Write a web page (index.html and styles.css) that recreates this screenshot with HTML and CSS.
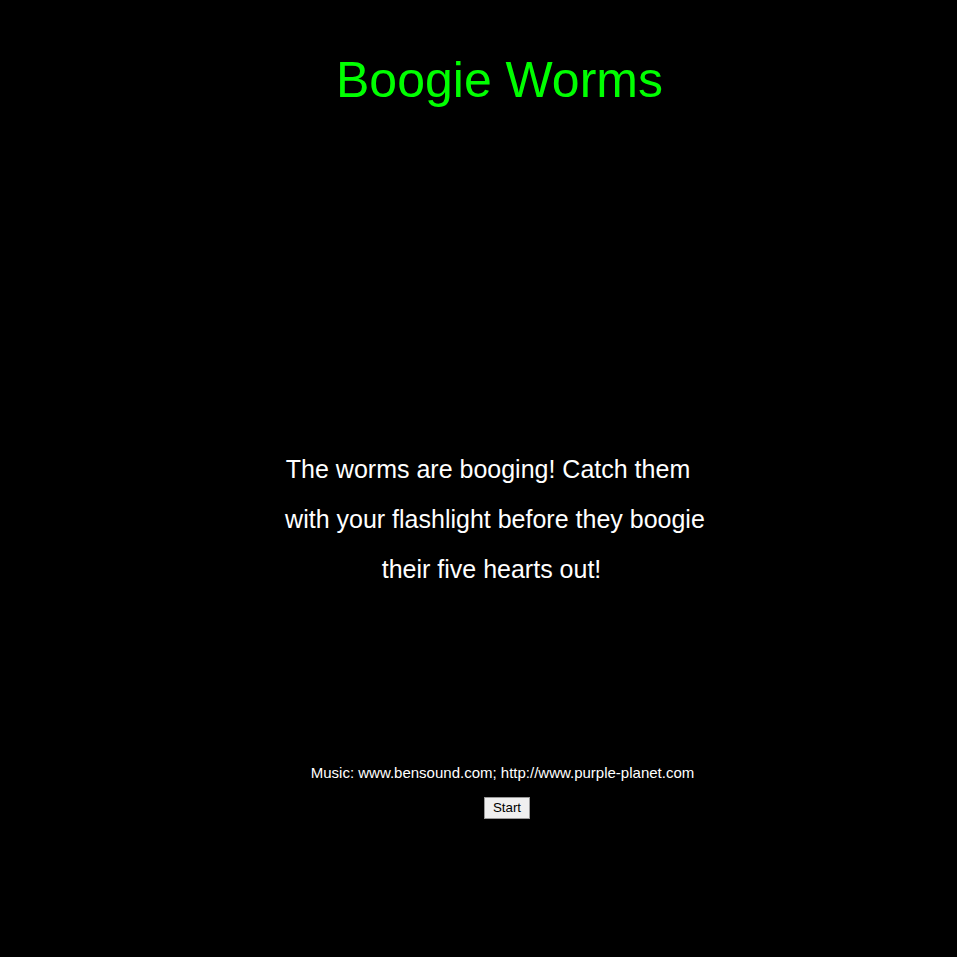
FILE: index.html
```html
<!DOCTYPE html>
<html lang="en">
<head>
<meta charset="utf-8">
<title>Boogie Worms</title>
<link rel="stylesheet" href="styles.css">
</head>
<body>
<main class="page">
  <h1 class="title">Boogie Worms</h1>
  <p class="intro">The worms are booging! Catch them&nbsp;<br>&nbsp;with your flashlight before they boogie<br>their five hearts out!</p>
  <p class="credits">Music: www.bensound.com; http://www.purple-planet.com</p>
  <div class="actions"><button class="start" type="button">Start</button></div>
</main>
</body>
</html>
```

FILE: styles.css
```css
html, body {
  margin: 0;
  padding: 0;
  background: #000;
}
body {
  font-family: "Liberation Sans", Arial, sans-serif;
  color: #fff;
}
.page {
  display: flex;
  flex-direction: column;
  padding-top: 52px;
}
.title {
  margin: 0;
  font-size: 50px;
  line-height: 56px;
  font-weight: normal;
  color: #00ff00;
  text-align: center;
  padding-left: 42px;
}
.intro {
  margin: 336px 0 0 0;
  font-size: 25px;
  line-height: 50px;
  text-align: center;
  padding-left: 26px;
}
.credits {
  margin: 170px 0 0 0;
  font-size: 15px;
  line-height: 17px;
  text-align: center;
  padding-left: 48px;
}
.actions {
  margin-top: 16px;
  display: flex;
  justify-content: center;
  padding-left: 57px;
}
.start {
  font-family: "Liberation Sans", Arial, sans-serif;
  font-size: 13.33px;
  line-height: 16px;
  padding: 2px 8px;
  border: 1px solid #999;
  border-radius: 0;
  background: #efefef;
  color: #000;
  margin: 0;
}
```
